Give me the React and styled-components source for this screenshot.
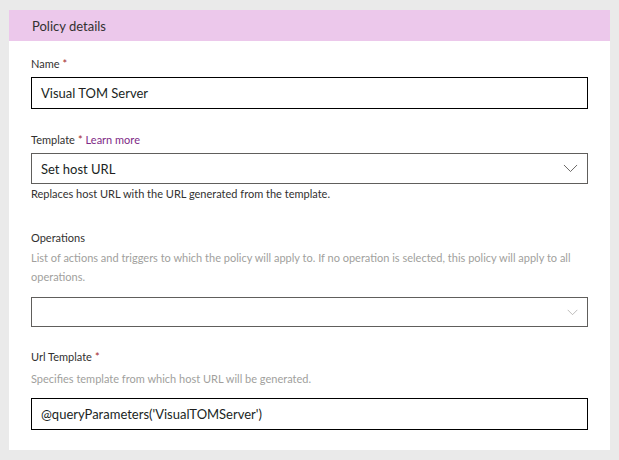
import React from "react";
import styled, { createGlobalStyle } from "styled-components";

const GlobalStyle = createGlobalStyle`
  html, body {
    margin: 0;
    padding: 0;
    background-color: #eaeaea;
    font-family: "Lato", "Open Sans", sans-serif;
  }
`;

const Page = styled.div`
  width: 619px;
  height: 460px;
  padding: 10px 9px;
  box-sizing: border-box;
`;

const Card = styled.div`
  background-color: #ffffff;
  height: 440px;
  display: flex;
  flex-direction: column;
`;

const Header = styled.div`
  height: 31px;
  background-color: #ecc8eb;
  display: flex;
  align-items: center;
  padding-left: 23px;
  font-size: 13px;
  color: #323130;
`;

const Form = styled.div`
  display: flex;
  flex-direction: column;
  padding: 14px 22px 0 22px;
`;

const Field = styled.div`
  display: flex;
  flex-direction: column;
  margin-top: ${(p) => p.$top || 0}px;
`;

const Label = styled.div`
  font-size: 11px;
  line-height: 18px;
  color: #323130;
  margin-bottom: ${(p) => (p.$gap != null ? p.$gap : 4)}px;
`;

const Required = styled.span`
  color: #a4262c;
  margin-left: 3px;
`;

const LearnMore = styled.a`
  color: #7e2a86;
  text-decoration: none;
  margin-left: 3px;
`;

const Description = styled.div`
  font-size: 11px;
  line-height: 19px;
  color: #a19f9d;
  margin-bottom: ${(p) => p.$gap || 0}px;
`;

const HelpText = styled.div`
  font-size: 11px;
  line-height: 17px;
  color: #323130;
  margin-top: 1px;
`;

const TextBox = styled.div`
  height: ${(p) => p.$height || 32}px;
  box-sizing: border-box;
  border: 1px solid #000000;
  display: flex;
  align-items: center;
  padding-left: 9px;
  font-size: 13px;
  color: #201f1e;
`;

const Select = styled.div`
  height: ${(p) => p.$height || 31}px;
  box-sizing: border-box;
  border: 1px solid ${(p) => p.$border || "#605e5c"};
  display: flex;
  align-items: center;
  justify-content: space-between;
  padding: 0 9px 0 9px;
  font-size: 13px;
  color: #201f1e;
`;

const Chevron = ({ size = 14, color = "#605e5c" }) => (
  <svg width={size} height={size / 2 + 1} viewBox="0 0 16 9" fill="none">
    <path d="M1 1 L8 8 L15 1" stroke={color} strokeWidth="1" />
  </svg>
);

export default function App() {
  return (
    <Page>
      <GlobalStyle />
      <Card>
        <Header>Policy details</Header>
        <Form>
          <Field>
            <Label>
              Name<Required>*</Required>
            </Label>
            <TextBox>Visual TOM Server</TextBox>
          </Field>

          <Field $top={22}>
            <Label>
              Template<Required>*</Required>
              <LearnMore href="#">Learn more</LearnMore>
            </Label>
            <Select>
              <span>Set host URL</span>
              <Chevron size={15} />
            </Select>
            <HelpText>Replaces host URL with the URL generated from the template.</HelpText>
          </Field>

          <Field $top={27}>
            <Label $gap={1}>Operations</Label>
            <Description $gap={11}>
              List of actions and triggers to which the policy will apply to. If no operation is
              selected, this policy will apply to all operations.
            </Description>
            <Select $height={30} $border="#605e5c">
              <span />
              <Chevron size={11} color="#a19f9d" />
            </Select>
          </Field>

          <Field $top={21}>
            <Label $gap={3}>
              Url Template<Required>*</Required>
            </Label>
            <Description $gap={10}>Specifies template from which host URL will be generated.</Description>
            <TextBox>@queryParameters('VisualTOMServer')</TextBox>
          </Field>
        </Form>
      </Card>
    </Page>
  );
}
